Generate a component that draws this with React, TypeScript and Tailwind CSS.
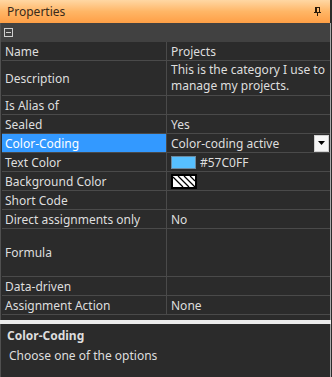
import React from "react";

const font = { fontFamily: '"Noto Sans", "Open Sans", sans-serif' };

function Row({
  label,
  children,
  h = "h-[19px]",
  selected = false,
  top = false,
}: {
  label: string;
  children?: React.ReactNode;
  h?: string;
  selected?: boolean;
  top?: boolean;
}) {
  return (
    <div className={`grid grid-cols-[165px_1fr] ${h} border-b border-[#4a4a4a]`}>
      <div
        className={`flex items-center pl-[3px] border-r border-[#4a4a4a] ${
          selected ? "bg-[#3399ff] text-white" : "text-[#dedede]"
        }`}
      >
        {label}
      </div>
      <div className={`flex ${top ? "items-start" : "items-center"} pl-[4px] text-[#dedede] min-w-0`}>
        {children}
      </div>
    </div>
  );
}

export default function App() {
  return (
    <div className="w-[332px] h-[377px] bg-[#2b2b2b] flex flex-col overflow-hidden text-[12px] leading-[15px]" style={font}>
      {/* Title */}
      <div className="h-[23px] w-[330px] flex items-center justify-between pl-[7px] pr-[9px] bg-gradient-to-b from-[#ffd7a3] via-[#ffb666] to-[#ff9f45] text-[#3a2a1a] text-[12px]">
        <span>Properties</span>
        <svg width="7" height="9" viewBox="0 0 7 9" fill="none" stroke="#2a1a0a" strokeWidth="1" shapeRendering="crispEdges">
          <rect x="1.5" y="0.5" width="4" height="4.5" />
          <line x1="0" y1="5.5" x2="7" y2="5.5" />
          <line x1="3.5" y1="5.5" x2="3.5" y2="9" />
          <line x1="2.5" y1="0.5" x2="2.5" y2="5" />
        </svg>
      </div>
      {/* body */}
      <div className="flex-1 flex flex-col border-l border-[#505050] border-r-[1px] border-r-[#a8a8a8] mr-[1px]">
        {/* toolbar */}
        <div className="h-[19px] bg-[#414141] flex items-center pl-[3px]">
          <svg width="9" height="9" viewBox="0 0 9 9" fill="none" stroke="#cfcfcf" strokeWidth="1" shapeRendering="crispEdges">
            <rect x="0.5" y="0.5" width="8" height="8" />
            <line x1="2" y1="4.5" x2="7" y2="4.5" />
          </svg>
        </div>
        <div className="pl-[1px] flex flex-col">
          <Row label="Name">Projects</Row>
          <Row label="Description" h="h-[35px]" top>
            <div className="flex flex-col pt-[1px]">
              <div className="leading-[16px] h-[16px]">This is the category I use to</div>
              <div className="leading-[16px] h-[16px]">manage my projects.</div>
            </div>
          </Row>
          <Row label="Is Alias of" />
          <Row label="Sealed">Yes</Row>
          <Row label="Color-Coding" selected>
            <div className="flex items-center justify-between w-full">
              <span>Color-coding active</span>
              <div className="w-[15px] h-[17px] bg-[#f6f6f6] border border-[#d0d0d0] flex items-center justify-center mr-[1px]">
                <svg width="7" height="4" viewBox="0 0 7 4">
                  <path d="M0 0 H7 L3.5 4 Z" fill="#000" />
                </svg>
              </div>
            </div>
          </Row>
          <Row label="Text Color">
            <div className="flex items-center gap-[4px]">
              <div className="w-[25px] h-[13px] bg-[#57c0ff] border border-[#6b8aa0]" />
              <span>#57C0FF</span>
            </div>
          </Row>
          <Row label="Background Color">
            <svg width="26" height="15" viewBox="0 0 26 15" shapeRendering="crispEdges">
              <rect x="0" y="0" width="26" height="15" fill="#000" />
              <rect x="2" y="2" width="22" height="11" fill="#fff" />
              <g stroke="#000" strokeWidth="1.2" shapeRendering="geometricPrecision">
                <line x1="2" y1="3" x2="12" y2="13" />
                <line x1="7" y1="2" x2="18" y2="13" />
                <line x1="13" y1="2" x2="24" y2="13" />
                <line x1="19" y1="2" x2="24" y2="7" />
              </g>
            </svg>
          </Row>
          <Row label="Short Code" />
          <Row label="Direct assignments only">No</Row>
          <Row label="Formula" h="h-[48px]" />
          <Row label="Data-driven" />
          <Row label="Assignment Action">None</Row>
        </div>
        <div className="h-[5px]" />
        <div className="h-[4px] bg-[#ececec] -ml-[1px] mr-[-1px]" />
        <div className="flex-1 pl-[6px] pt-[4px] text-[#dedede]">
          <div className="font-bold leading-[16px]">Color-Coding</div>
          <div className="pl-[2px] pt-[4px] leading-[16px]">Choose one of the options</div>
        </div>
      </div>
    </div>
  );
}
